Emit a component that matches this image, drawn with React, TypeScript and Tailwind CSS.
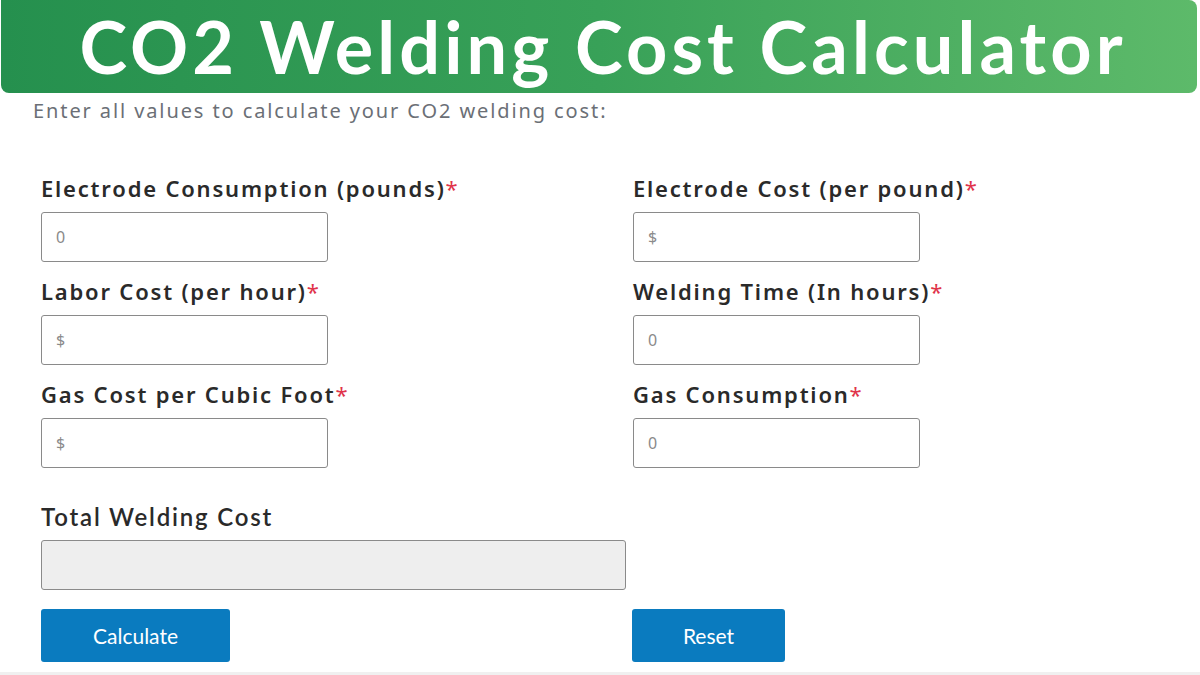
import React from "react";

const Label = ({ text, req = true }: { text: string; req?: boolean }) => (
  <div className="text-[22px] font-semibold text-[#2a2a2a] leading-[26px] tracking-[1.8px]" style={{ fontFamily: '"Noto Sans", sans-serif' }}>
    {text}
    {req && <span className="text-[#e0334a] font-normal">*</span>}
  </div>
);

const Field = ({ label, ph }: { label: string; ph: string }) => (
  <div className="flex flex-col">
    <Label text={label} />
    <div className="mt-[11px] w-[287px] h-[50px] border border-[#8a8a8a] rounded-[3px] flex items-center pl-[14px] text-[16px] tracking-[1px] text-[#8a8a8a] bg-white" style={{ fontFamily: '"Noto Sans", sans-serif' }}>
      {ph}
    </div>
  </div>
);

export default function App() {
  return (
    <div className="w-[1200px] h-[675px] bg-white overflow-hidden relative">
      <div className="ml-[1px] mr-[3px] h-[93px] rounded-b-[8px] rounded-tr-[8px] bg-gradient-to-r from-[#25904e] via-[#38a158] to-[#5dba6a] flex items-center justify-center">
        <h1 className="text-white text-[72px] font-bold leading-none tracking-[4.1px] -mt-[2px] pl-[8px]" style={{ fontFamily: 'Lato, sans-serif' }}>
          CO2 Welding Cost Calculator
        </h1>
      </div>
      <div className="pl-[33px] pt-[5px] text-[20px] text-[#6b6f76] leading-[26px] tracking-[1.9px]" style={{ fontFamily: '"Noto Sans", sans-serif' }}>
        Enter all values to calculate your CO2 welding cost:
      </div>
      <div className="pl-[41px] pt-[51px]">
        <div className="grid grid-cols-[592px_1fr] gap-y-[16px]">
          <Field label="Electrode Consumption (pounds)" ph="0" />
          <Field label="Electrode Cost (per pound)" ph="$" />
          <Field label="Labor Cost (per hour)" ph="$" />
          <Field label="Welding Time (In hours)" ph="0" />
          <Field label="Gas Cost per Cubic Foot" ph="$" />
          <Field label="Gas Consumption" ph="0" />
        </div>
        <div className="mt-[35px] text-[24px] font-semibold text-[#2a2a2a] leading-[28px] tracking-[1.8px]" style={{ fontFamily: 'Lato, sans-serif' }}>
          Total Welding Cost
        </div>
        <div className="mt-[9px] w-[585px] h-[50px] border border-[#8a8a8a] rounded-[3px] bg-[#eeeeee]" />
        <div className="mt-[19px] flex">
          <button className="w-[189px] h-[53px] rounded-[3px] bg-[#0a7bbf] text-white text-[21px] leading-none" style={{ fontFamily: 'Lato, sans-serif' }}>
            Calculate
          </button>
          <button className="ml-[402px] w-[153px] h-[53px] rounded-[3px] bg-[#0a7bbf] text-white text-[21px] leading-none" style={{ fontFamily: 'Lato, sans-serif' }}>
            Reset
          </button>
        </div>
      </div>
      <div className="absolute bottom-0 left-0 right-0 h-[3px] bg-[#f0f0f0]" />
    </div>
  );
}
